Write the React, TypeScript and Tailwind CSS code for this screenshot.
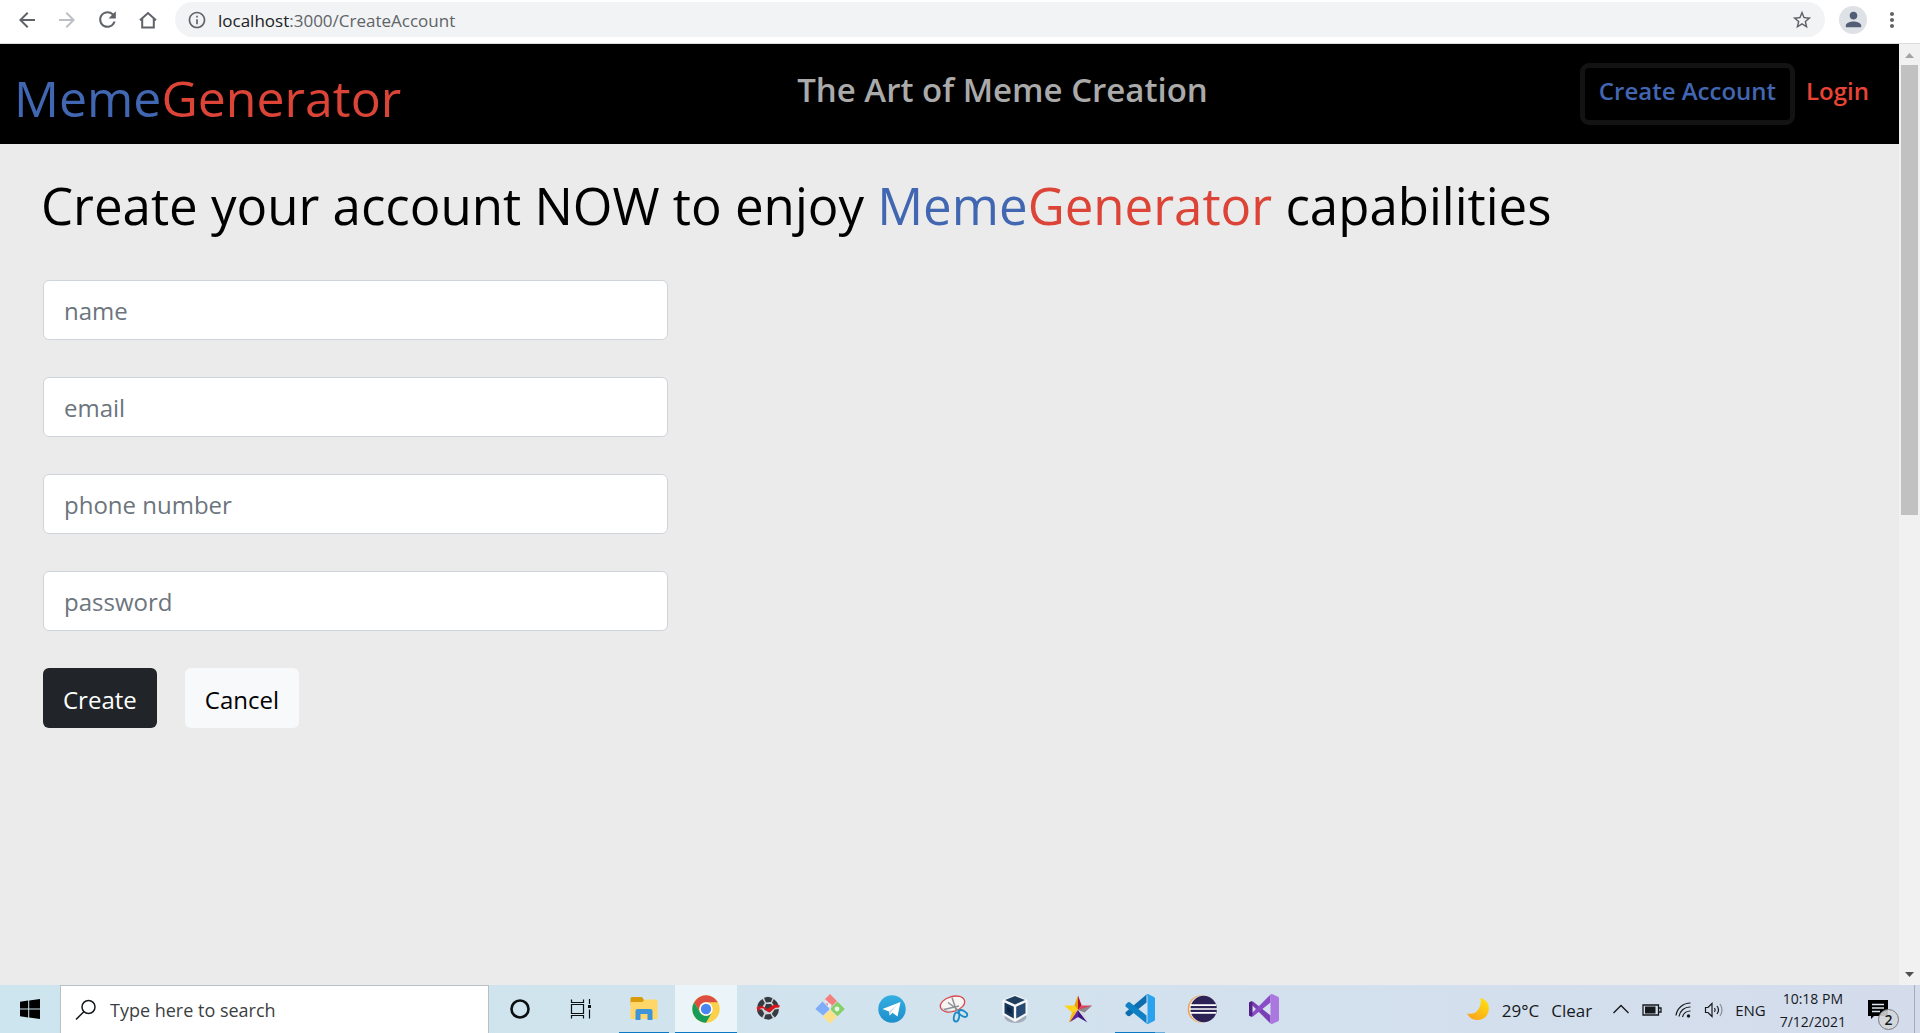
import type { ReactNode } from "react";
import {
  MdArrowBack,
  MdArrowForward,
  MdInfoOutline,
  MdMoreVert,
  MdPerson,
  MdRefresh,
  MdStarBorder,
} from "react-icons/md";

function Brand() {
  return (
    <>
      <span className="text-[#4267b2]">Meme</span>
      <span className="text-[#db4437]">Generator</span>
    </>
  );
}

function BrowserBar() {
  return (
    <div className="flex h-11 shrink-0 items-center border-b border-[#dadce0] bg-white pb-1 pl-[15px] text-[#5f6368]">
      <div className="flex items-center gap-4">
        <button type="button" aria-label="Back"><MdArrowBack size={24} /></button>
        <button type="button" aria-label="Forward" className="text-[#bcbfc3]"><MdArrowForward size={24} /></button>
        <button type="button" aria-label="Reload"><MdRefresh size={25} /></button>
        <button type="button" aria-label="Home">
          <svg width="24" height="24" viewBox="0 0 24 24" fill="none" stroke="currentColor" strokeWidth="2">
            <path d="M4 12.3 12 5l8 7.3M6.2 10.8V19.4h11.6V10.8" />
          </svg>
        </button>
      </div>
      <div className="ml-[15px] flex h-[35px] flex-1 items-center rounded-full bg-[#f1f3f4] pl-3 pr-3">
        <MdInfoOutline size={20} className="shrink-0" />
        <div role="textbox" aria-label="Address" tabIndex={0} className="ml-[11px] flex-1 pt-0.5 text-[17px] leading-6">
          <span className="text-[#202124]">localhost</span>:3000/CreateAccount
        </div>
        <button type="button" aria-label="Bookmark this page"><MdStarBorder size={22} /></button>
      </div>
      <button type="button" aria-label="Profile" className="ml-3.5 flex size-7 items-center justify-center rounded-full bg-[#dee1e6] text-[#525e75]">
        <MdPerson size={23} />
      </button>
      <button type="button" aria-label="Menu" className="ml-[13px] mr-4"><MdMoreVert size={24} /></button>
    </div>
  );
}

function SiteHeader() {
  return (
    <header className="flex h-[100px] items-start justify-between bg-black pl-3.5 pr-[30px]">
      <a href="#home" className="mt-4 text-[50px] leading-[76px]"><Brand /></a>
      <p className="ml-6 mt-5 text-[33px] font-semibold leading-[52px] text-[#aaaaaa]">The Art of Meme Creation</p>
      <nav className="mt-[19px] flex items-start gap-[11px] text-[24px] font-semibold">
        <a href="#create" className="h-[62px] rounded-[9px] border-[5px] border-[#131313] px-3.5 leading-[46px] text-[#4267b2]">Create Account</a>
        <a href="#login" className="mt-[5px] leading-[46px] text-[#ea4335]">Login</a>
      </nav>
    </header>
  );
}

const fields = [
  { id: "name", type: "text" },
  { id: "email", type: "email" },
  { id: "phone number", type: "tel" },
  { id: "password", type: "password" },
];

function AccountForm() {
  return (
    <main className="px-[43px] pt-[26px] text-black">
      <h1 className="-ml-0.5 text-[51px] leading-[70px]">
        Create your account NOW to enjoy <Brand /> capabilities
      </h1>
      <form className="mt-10 flex flex-col gap-[37px]">
        {fields.map((f) => (
          <input
            key={f.id}
            id={f.id}
            type={f.type}
            aria-label={f.id}
            placeholder={f.id}
            className="h-[60px] w-full max-w-[625px] rounded-md border border-[#ced4da] bg-white px-5 pt-px text-[24px] placeholder:text-[#6c757d]"
          />
        ))}
        <div className="flex gap-7">
          <button type="button" className="h-[60px] rounded-md bg-[#212529] px-5 pt-1 text-[24px] text-white">Create</button>
          <button type="button" className="h-[60px] rounded-md bg-[#f8f9fa] px-5 pt-1 text-[24px] text-black">Cancel</button>
        </div>
      </form>
    </main>
  );
}

function ScrollTrack() {
  return (
    <div aria-hidden="true" className="flex w-[21px] shrink-0 flex-col items-center bg-[#f1f1f1]">
      <svg width="21" height="21" viewBox="0 0 21 21"><path d="M6 14h9l-4.500-5z" fill="#a3a3a3" /></svg>
      <div className="h-[450px] w-[17px] bg-[#c1c1c1]" />
      <div className="flex-1" />
      <svg width="21" height="21" viewBox="0 0 21 21"><path d="M6 8h9l-4.500 5z" fill="#505050" /></svg>
    </div>
  );
}

function Art({ children }: { children: ReactNode }) {
  return <svg width="30" height="30" viewBox="0 0 30 30" fill="none" aria-hidden="true">{children}</svg>;
}

function CortanaIcon() {
  return <Art><circle cx="15" cy="15" r="8.500" stroke="#0b0f12" strokeWidth="2.600" /></Art>;
}

function TaskViewIcon() {
  return (
    <Art>
      <g stroke="#0b0f12" strokeWidth="1.200">
        <path d="M4.500 5.500v3h12v-3M4.500 24.500v-3h12v3M4.500 10.500h12v9h-12zM22.500 5v5M22.500 15.500v9" />
      </g>
      <path d="M21 11h3v3h-3z" fill="#0b0f12" />
    </Art>
  );
}

function FolderIcon() {
  return (
    <Art>
      <path d="M1.500 4.500q0-1.500 1.500-1.500h10l2 3v5H1.500z" fill="#d99a0c" />
      <path d="M1.500 8h12l2-2.500h11.500q1.500 0 1.500 1.500v18H1.500z" fill="#ffd768" />
      <path d="M6.500 26V17q0-2 2-2h13q2 0 2 2v9h-5v-6h-7v6z" fill="#3d94d9" />
    </Art>
  );
}

function ChromeIcon() {
  return (
    <Art>
      <circle cx="15" cy="15" r="13.700" fill="#fbd04b" />
      <path d="M3.140 8.150A13.700 13.700 0 0 1 26.860 8.150H15A6.850 6.850 0 0 0 9.070 18.430z" fill="#dc4e41" />
      <path d="M3.140 8.150A13.700 13.700 0 0 0 15 28.700L20.930 18.430A6.850 6.850 0 0 1 9.070 18.430z" fill="#179c5a" />
      <circle cx="15" cy="15" r="6.700" fill="#fff" />
      <circle cx="15" cy="15" r="5.200" fill="#4a86f0" />
    </Art>
  );
}

function BallIcon() {
  return (
    <Art>
      <circle cx="15" cy="14.500" r="10.800" fill="#cdd3d8" />
      <g fill="#353b41">
        <path d="M11 3.800l4-1 4.500 1.200-1.500 4-5 .5zM20.800 5l3.200 3 1.800 4-4.500-.3-2.300-3zM9.500 5 11.800 9 9 13.200l-4.800-.5q.700-5 5.300-7.700zM13 10h5.200l2.300 4-4 4.500-5.500-3zM4 15l5 .5 2.200 4-2 4q-5-2.500-5.200-8.500zM21.500 15.500l4.300-.500q0 5.500-4 8.500l-3-3.500zM12.500 20.500l5-.500 2.300 4-3.800 1.700-5-1z" />
      </g>
      <path d="M3.500 13.500q3-2 6-1.500 2 1.500 5 3 4-3.500 7-4.500 3 .5 5.500 1l-1 2-3.500.3q-3 1.500-5.500 4.500-4-1-6-3.800-3-.5-4.500.5 0 2-1.500 3z" fill="#d8141c" />
    </Art>
  );
}

function GitIcon() {
  return (
    <Art>
      <path d="M15 0 22 7 15 14 11 10l2-2-4-2z" fill="#f47f7f" />
      <path d="M7.500 7.500 15 15l-7 6.500L.300 15z" fill="#7fadf7" />
      <path d="M22.500 7.500 29.800 15l-7.300 7.200L15 15z" fill="#86d067" />
      <path d="M15 15.800 22 22.500 15 29.800 8 22.500z" fill="#fde08a" />
      <path d="M9.500 5.500l5.500 5.500v5" stroke="#dfeaf2" strokeWidth="1.400" />
      <circle cx="22" cy="15" r="2.400" fill="#e6f2ea" />
      <circle cx="14.500" cy="11.500" r="2" fill="#e8f1f8" />
    </Art>
  );
}

function TelegramIcon() {
  return (
    <Art>
      <defs>
        <linearGradient id="tg" x1="0" y1="0" x2="0" y2="1"><stop stopColor="#35aee2" /><stop offset="1" stopColor="#1c8fcb" /></linearGradient>
      </defs>
      <circle cx="15" cy="15" r="13.700" fill="url(#tg)" />
      <path d="M5.500 15 23.500 8 20.500 22.500 15.500 18.800 12.800 21.500 12 17.500z" fill="#fff" />
      <path d="M12 17.500 20 11l-6 7.300-1.200 3.200z" fill="#c8daea" />
    </Art>
  );
}

function SnipIcon() {
  return (
    <Art>
      <ellipse cx="13.500" cy="10" rx="12.500" ry="7.500" transform="rotate(-16 13.500 10)" fill="#f7f4f4" stroke="#d9474c" strokeWidth="1.300" />
      <path d="M3 13.500q2.500 4.500 9.500 3.500" stroke="#b9bfc4" strokeWidth="1" />
      <path d="M13 3.500 17.500 17M5 15.500 20 12M9 8.500l12 9" stroke="#8b9197" strokeWidth="1.500" />
      <ellipse cx="17.500" cy="23" rx="2.600" ry="4.600" transform="rotate(12 17.500 23)" stroke="#1b8bc8" strokeWidth="1.800" />
      <ellipse cx="24" cy="19.500" rx="2.600" ry="4.600" transform="rotate(-58 24 19.500)" stroke="#1b8bc8" strokeWidth="1.800" />
    </Art>
  );
}

function VirtualBoxIcon() {
  return (
    <Art>
      <ellipse cx="14.500" cy="23" rx="11" ry="6" fill="#a5adb8" />
      <path d="M14 .8 26.500 6v14.500L14 28 1.500 20.500V6z" fill="#f4f6f8" />
      <path d="M14 2 24 6 14 10.500 4 6z" fill="#1f3d5c" />
      <path d="M3.500 8.500 12.800 12.800v11.800L3.500 19.300z" fill="#16365a" />
      <path d="M24.500 8.500 15.200 12.800v11.800l9.300-5.300z" fill="#274a73" />
      <path d="M6 12.500l4.500 2.200v5.300L6 17.500z" fill="#0c2444" />
    </Art>
  );
}

function StarIcon() {
  return (
    <Art>
      <path d="M15 1.500V16L11.300 11.500z" fill="#e8a10a" />
      <path d="M15 1.500 18.700 11.500 15 16z" fill="#b3122c" />
      <path d="M1 11.500h10.300L15 16l-6 2.500z" fill="#ffd21c" />
      <path d="M29 11.500H18.700L15 16l6.300 2.500z" fill="#e0405e" />
      <path d="M29 11.500 21.300 18.500 15 16z" fill="#878b90" />
      <path d="M5.800 28.500 9 18.500 15 16z" fill="#f8b810" />
      <path d="M5.800 28.500 15 16v7z" fill="#f09a10" />
      <path d="M7 28 15 16v7z" fill="#5a23a8" />
      <path d="M24.500 28.500 15 23v-7z" fill="#3b1784" />
      <path d="M24.500 28.500 21.300 18.500 15 16z" fill="#d8d9dc" />
    </Art>
  );
}

function CodeIcon() {
  return (
    <Art>
      <path d="M21.500.5v8L4.500 22.300 2.800 22 .5 19.800v-1.600z" fill="#0f6cae" />
      <path d="M.5 10.800v1.600L21.500 29.500v-8L4.500 8 3 8.200z" fill="#1080c5" />
      <path d="M21 .3 23 0l6 3q1 .5 1 1.500v21q0 1-1 1.500l-6 3-2-.300q1.500-.300 1.500-2V2.300Q22.500.700 21 .3z" fill="#2aa2ee" />
    </Art>
  );
}

function EclipseIcon() {
  return (
    <Art>
      <circle cx="14.500" cy="15" r="13.800" fill="#f4a342" />
      <circle cx="16" cy="15" r="13.800" fill="#e5dfe8" />
      <circle cx="16.700" cy="15" r="13.200" fill="#2c2255" />
      <path d="M3 11.200h26M2.500 15h27.500M3 18.800h26" stroke="#fff" strokeWidth="1.700" />
    </Art>
  );
}

function StudioIcon() {
  return (
    <Art>
      <path d="M0 8.500 2.500 7.300 4 7.500 21.500 21.500v8L2.500 10.500z" fill="#7b3fb5" />
      <path d="M0 21.500 2.500 22.700 4 22.500 21.500 8.500v-8L2.500 19.500z" fill="#8a4cc7" />
      <path d="M0 8.500 2.500 7.300 3.500 9v12L2.500 22.700 0 21.500z" fill="#52218a" />
      <path d="M21.500.3 23 0l6 2.800q1 .5 1 1.500v21.400q0 1-1 1.500L23 30l-1.500-.300z" fill="#ab78e0" />
    </Art>
  );
}

type Task = { label: string; icon: ReactNode; state?: "open" | "active" | "group" };

const tasks: Task[] = [
  { label: "Cortana", icon: <CortanaIcon /> },
  { label: "Task View", icon: <TaskViewIcon /> },
  { label: "File Explorer", icon: <FolderIcon />, state: "open" },
  { label: "Google Chrome", icon: <ChromeIcon />, state: "active" },
  { label: "Football", icon: <BallIcon /> },
  { label: "Git", icon: <GitIcon /> },
  { label: "Telegram", icon: <TelegramIcon /> },
  { label: "Snipping Tool", icon: <SnipIcon /> },
  { label: "VirtualBox", icon: <VirtualBoxIcon /> },
  { label: "Star", icon: <StarIcon /> },
  { label: "Visual Studio Code", icon: <CodeIcon />, state: "group" },
  { label: "Eclipse", icon: <EclipseIcon /> },
  { label: "Visual Studio", icon: <StudioIcon /> },
];

function TaskButton({ label, icon, state }: Task) {
  return (
    <button
      type="button"
      aria-label={label}
      className={
        "relative flex h-12 w-[62px] items-center justify-center " + (state === "active" ? "bg-[#ebf5f9]" : "")
      }
    >
      {icon}
      {state === "active" && <span className="absolute inset-x-0 bottom-0 h-px bg-[#0a78c4]" />}
      {state === "open" && <span className="absolute inset-x-1.5 bottom-0 h-px bg-[#0a78c4]" />}
      {state === "group" && (
        <span className="absolute inset-x-1.5 bottom-0 flex h-px">
          <span className="flex-1 bg-[#0a78c4]" />
          <span className="w-2.5 bg-[#67aee0]" />
        </span>
      )}
    </button>
  );
}

function Tray() {
  return (
    <div className="ml-auto flex h-full items-center text-[#16191c]">
      <svg width="24" height="24" viewBox="0 0 24 24" aria-hidden="true">
        <defs>
          <linearGradient id="moon" x1="1" y1="0" x2="0.400" y2="1"><stop stopColor="#ffe60a" /><stop offset="1" stopColor="#fba81c" /></linearGradient>
        </defs>
        <path d="M14.500.800Q23.500 4 22.800 12.500 21.500 22.500 11.500 23 4 22.800 1 16.500q7 1.500 11-3.500T14.500.800z" fill="url(#moon)" />
      </svg>
      <span className="ml-3 pt-1 text-[17px]">29°C</span>
      <span className="ml-3 pt-1 text-[17px]">Clear</span>
      <div className="ml-5 flex items-center gap-3 pt-0.5">
        <svg width="18" height="20" viewBox="0 0 18 20" fill="none" stroke="currentColor" strokeWidth="1.400"><path d="M1.500 13 9 5.500 16.500 13" /></svg>
        <svg width="20" height="20" viewBox="0 0 20 20" fill="none" stroke="currentColor" strokeWidth="1.300"><path d="M1 5h15.500v10H1zM17 8h2v4h-2" /><path d="M3 6.500h10.500v7H3z" fill="currentColor" stroke="none" /></svg>
        <svg width="18" height="20" viewBox="0 0 18 20" fill="none" stroke="currentColor" strokeWidth="1.200"><path d="M2 15.500A14.500 14.500 0 0 1 16.500 3M5 16.500A11 11 0 0 1 16.500 7M8.500 17A8 8 0 0 1 16.500 11" /><circle cx="14.500" cy="16" r="1.700" fill="currentColor" stroke="none" /></svg>
        <svg width="21" height="20" viewBox="0 0 21 20" fill="none" stroke="currentColor" strokeWidth="1.200"><path d="M1.500 7.500h2.500L8 3.500v13L4 12.500H1.500zM10.500 8q1.500 2 0 4M13 6q3 4 0 8" /><path d="M16 4q4 6 0 12" opacity=".4" /></svg>
      </div>
      <span className="ml-2.5 pt-0.5 text-[15px]">ENG</span>
      <time className="ml-3.5 flex flex-col items-center pt-0.5 text-[14px] leading-[23px]">
        <span>10:18 PM</span>
        <span>7/12/2021</span>
      </time>
      <button type="button" aria-label="2 notifications" className="relative ml-[22px] h-12 w-[32px]">
        <svg width="21" height="20" viewBox="0 0 21 20" className="absolute left-0 top-[15px]"><path d="M0 0h20v16H6l-3 3v-3H0z" fill="#000" /><path d="M4 4.500h12M4 8h12M4 11.500h8" stroke="#dce6f0" strokeWidth="1.400" /></svg>
        <span className="absolute left-[10px] top-6 flex size-[21px] items-center justify-center rounded-full border border-[#77797c] bg-[#d3d6d9]/90 text-[14px] font-semibold">2</span>
      </button>
      <div className="ml-3.5 h-full w-1.5 border-l border-[#a3acb8]" />
    </div>
  );
}

function Taskbar() {
  return (
    <footer className="flex h-12 shrink-0 items-center bg-linear-to-r from-[#cde5ee] via-[#d2e3ee] to-[#d4dcec]">
      <button type="button" aria-label="Start" className="flex h-12 w-[60px] items-center justify-center">
        <svg width="20" height="20" viewBox="0 0 20 20"><path d="M0 2.800 8.200 1.600v7.900H0zM9.200 1.400 20 0v9.500H9.200zM0 10.500h8.200v7.900L0 17.200zM9.200 10.500H20V20L9.200 18.600z" /></svg>
      </button>
      <div className="flex h-12 w-[429px] items-center border border-b-0 border-[#b9c0c4] bg-white pl-3.5">
        <svg width="22" height="22" viewBox="0 0 22 22" fill="none" stroke="#16191c" strokeWidth="1.500" aria-hidden="true"><circle cx="13.500" cy="8" r="6.500" /><path d="M8.800 12.700 1 20.500" /></svg>
        <input type="search" aria-label="Search" placeholder="Type here to search" className="ml-[13px] h-10 flex-1 text-[18px] placeholder:text-[#3b3f42]" />
      </div>
      {tasks.map((t) => <TaskButton key={t.label} {...t} />)}
      <Tray />
    </footer>
  );
}

export default function App() {
  return (
    <div className="flex h-screen flex-col overflow-hidden font-['Open_Sans',sans-serif]">
      <BrowserBar />
      <div className="flex min-h-0 flex-1">
        <div className="flex-1 overflow-hidden bg-[#ebebeb]">
          <SiteHeader />
          <AccountForm />
        </div>
        <ScrollTrack />
      </div>
      <Taskbar />
    </div>
  );
}
